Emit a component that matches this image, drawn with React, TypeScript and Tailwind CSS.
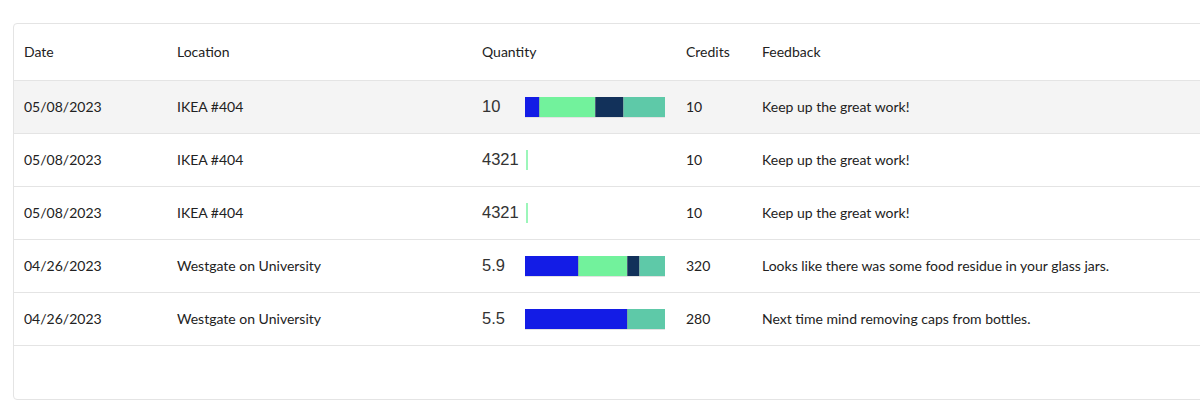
type Segment = { color: string; width: number }

interface Row {
  date: string
  location: string
  quantity: string
  credits: number
  feedback: string
  bar: Segment[]
}

const BLUE = "bg-[#131ce6]"
const GREEN = "bg-[#72f29c]"
const NAVY = "bg-[#12315a]"
const TEAL = "bg-[#5ec9a8]"

const ROWS: Row[] = [
  {
    date: "05/08/2023",
    location: "IKEA #404",
    quantity: "10",
    credits: 10,
    feedback: "Keep up the great work!",
    bar: [
      { color: BLUE, width: 14 },
      { color: GREEN, width: 56 },
      { color: NAVY, width: 28 },
      { color: TEAL, width: 42 },
    ],
  },
  {
    date: "05/08/2023",
    location: "IKEA #404",
    quantity: "4321",
    credits: 10,
    feedback: "Keep up the great work!",
    bar: [{ color: GREEN, width: 2 }],
  },
  {
    date: "05/08/2023",
    location: "IKEA #404",
    quantity: "4321",
    credits: 10,
    feedback: "Keep up the great work!",
    bar: [{ color: GREEN, width: 2 }],
  },
  {
    date: "04/26/2023",
    location: "Westgate on University",
    quantity: "5.9",
    credits: 320,
    feedback: "Looks like there was some food residue in your glass jars.",
    bar: [
      { color: BLUE, width: 53 },
      { color: GREEN, width: 49 },
      { color: NAVY, width: 12 },
      { color: TEAL, width: 26 },
    ],
  },
  {
    date: "04/26/2023",
    location: "Westgate on University",
    quantity: "5.5",
    credits: 280,
    feedback: "Next time mind removing caps from bottles.",
    bar: [
      { color: BLUE, width: 102 },
      { color: TEAL, width: 38 },
    ],
  },
]

function QuantityBar({ segments }: { segments: Segment[] }) {
  const full = segments.reduce((s, x) => s + x.width, 0) >= 100
  return (
    <div className={full ? "flex h-5 w-[140px] shadow-[0_1px_0_#e2e2e2]" : "flex h-5 w-[140px] pl-px"}>
      {segments.map((seg, i) => (
        <div
          key={i}
          className={`${seg.color} h-full ${i > 0 ? "border-l border-[#8a8f99]/50" : ""} ${full ? "" : "opacity-70"}`}
          style={{ width: seg.width }}
        />
      ))}
    </div>
  )
}

export default function App() {
  return (
    <div className="h-[414px] w-[1200px] overflow-hidden bg-white pl-[13px] pt-[23px] font-['Lato','Noto_Sans',sans-serif] text-sm text-[#222]">
      <div className="h-[377px] w-[1240px] rounded border border-[#e4e4e4] bg-white">
        <table className="w-full border-collapse text-left">
          <thead>
            <tr className="h-[56px] border-b border-[#e4e4e4]">
              <th className="w-[153px] pl-[10px] font-normal">Date</th>
              <th className="w-[305px] pl-[10px] font-normal">Location</th>
              <th className="w-[204px] pl-[10px] font-normal">Quantity</th>
              <th className="w-[76px] pl-[10px] font-normal">Credits</th>
              <th className="pl-[10px] font-normal">Feedback</th>
            </tr>
          </thead>
          <tbody>
            {ROWS.map((r, i) => (
              <tr
                key={i}
                className={`h-[53px] border-b border-[#e4e4e4] ${i === 0 ? "bg-[#f4f4f4]" : ""}`}
              >
                <td className="pl-[10px]">{r.date}</td>
                <td className="pl-[10px]">{r.location}</td>
                <td className="pl-[10px]">
                  <div className="flex items-center">
                    <span className="w-[43px] font-['Liberation_Sans',Arial,sans-serif] text-[16.5px] text-[#333]">
                      {r.quantity}
                    </span>
                    <QuantityBar segments={r.bar} />
                  </div>
                </td>
                <td className="pl-[10px]">{r.credits}</td>
                <td className="pl-[10px]">{r.feedback}</td>
              </tr>
            ))}
          </tbody>
        </table>
      </div>
    </div>
  )
}
